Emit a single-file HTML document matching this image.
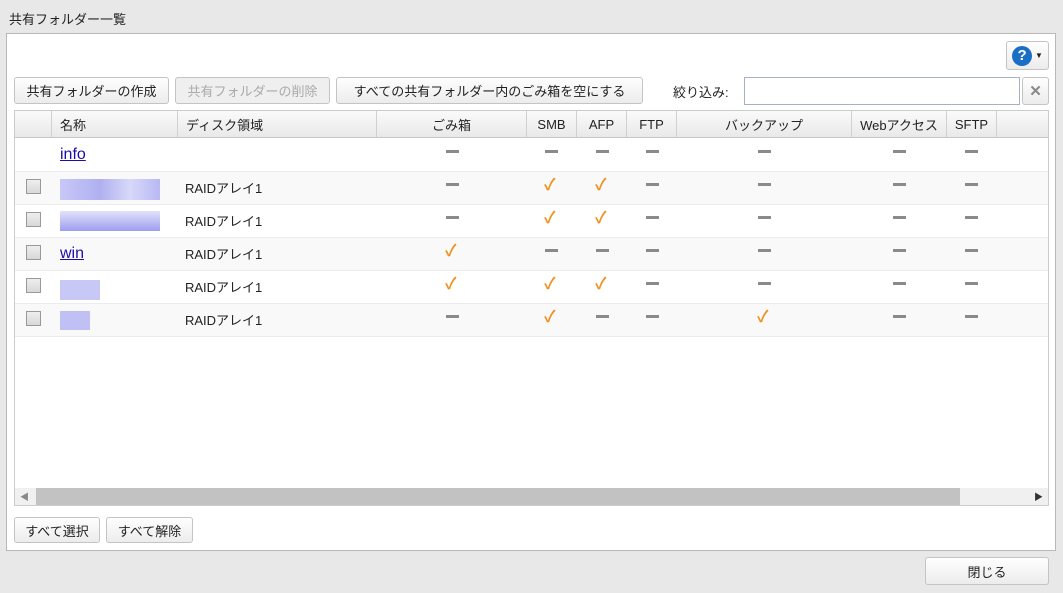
<!DOCTYPE html><html><head><meta charset="utf-8"><style>
*{box-sizing:border-box}body{margin:0;width:1063px;height:593px;background:#e8e8e8;font-family:"Liberation Sans","Noto Sans CJK JP",sans-serif;font-size:13px;color:#222;position:relative;overflow:hidden}
.a{position:absolute}
.btn{position:absolute;border:1px solid #c4c4c4;border-radius:3px;background:linear-gradient(#fefefe,#ececec);font-size:13px;display:flex;align-items:center;justify-content:center;color:#222}
.hd{position:absolute;top:111px;height:27px;border-right:1px solid #d0d0d0;background:linear-gradient(#fafafa,#e9e9e9);border-bottom:1px solid #c8c8c8;display:flex;align-items:center;font-size:13px}
.row{position:absolute;left:15px;width:1033px;height:33px;border-bottom:1px solid #ececec}
.d{position:absolute;width:13px;height:3px;background:#8a8a8a}
.c{position:absolute;color:#f0901e;font-size:16px;font-weight:bold}
.cb{position:absolute;left:26px;width:15px;height:15px;border:1px solid #999;background:linear-gradient(#eee,#d8d8d8)}
.r{position:absolute;left:185px;font-size:13px}
</style></head><body>
<div class="a" style="left:9px;top:9px;font-size:13px">共有フォルダー一覧</div>
<div class="a" style="left:6px;top:33px;width:1050px;height:518px;background:#fff;border:1px solid #b8b8b8"></div>
<div class="btn" style="left:1006px;top:41px;width:43px;height:29px"><span style="display:inline-block;width:20px;height:20px;border-radius:50%;background:#1a6fc4;color:#fff;font-weight:bold;text-align:center;line-height:20px;font-size:15px">?</span><span style="font-size:8px;margin-left:3px">▼</span></div>
<div class="btn" style="left:14px;top:77px;width:155px;height:27px">共有フォルダーの作成</div>
<div class="btn" style="left:175px;top:77px;width:155px;height:27px;color:#aaa;background:#efefef">共有フォルダーの削除</div>
<div class="btn" style="left:336px;top:77px;width:307px;height:27px">すべての共有フォルダー内のごみ箱を空にする</div>
<div class="a" style="left:673px;top:82px">絞り込み:</div>
<div class="a" style="left:744px;top:77px;width:276px;height:28px;border:1px solid #a8b0c8"></div>
<div class="btn" style="left:1022px;top:77px;width:27px;height:28px;color:#888;font-weight:bold;font-size:15px">✕</div>
<div class="a" style="left:14px;top:110px;width:1035px;height:396px;border:1px solid #ccc"></div>
<div class="hd" style="left:15px;width:37px"></div>
<div class="hd" style="left:52px;width:126px;padding-left:8px">名称</div>
<div class="hd" style="left:178px;width:199px;padding-left:8px">ディスク領域</div>
<div class="hd" style="left:377px;width:150px;justify-content:center">ごみ箱</div>
<div class="hd" style="left:527px;width:50px;justify-content:center">SMB</div>
<div class="hd" style="left:577px;width:50px;justify-content:center">AFP</div>
<div class="hd" style="left:627px;width:50px;justify-content:center">FTP</div>
<div class="hd" style="left:677px;width:175px;justify-content:center">バックアップ</div>
<div class="hd" style="left:852px;width:95px;justify-content:center">Webアクセス</div>
<div class="hd" style="left:947px;width:50px;justify-content:center">SFTP</div>
<div class="hd" style="left:997px;width:51px;border-right:0"></div>

<div class="row" style="top:139px;background:#fff"></div>
<div class="row" style="top:172px;background:#f9f9f9"></div>
<div class="row" style="top:205px;background:#fff"></div>
<div class="row" style="top:238px;background:#f9f9f9"></div>
<div class="row" style="top:271px;background:#fff"></div>
<div class="row" style="top:304px;background:#f9f9f9"></div>

<a class="a" style="left:60px;top:146px;font-size:16px;color:#1a0dab;text-decoration:underline">info</a>
<a class="a" style="left:60px;top:245px;font-size:16px;color:#1a0dab;text-decoration:underline">win</a>
<div class="a" style="left:60px;top:179px;width:100px;height:21px;background:linear-gradient(90deg,#c8c8f8,#b0b0f0 40%,#d8d8fa 70%,#b8b8f4)"></div>
<div class="a" style="left:60px;top:211px;width:100px;height:20px;background:linear-gradient(#e2e2fb,#9d9df0)"></div>
<div class="a" style="left:60px;top:280px;width:40px;height:20px;background:#c8c8f6"></div>
<div class="a" style="left:60px;top:311px;width:30px;height:19px;background:#c0c0f4"></div>

<div class="cb" style="top:179px"></div><div class="cb" style="top:212px"></div><div class="cb" style="top:245px"></div><div class="cb" style="top:278px"></div><div class="cb" style="top:311px"></div>
<div class="r" style="top:178px">RAIDアレイ1</div><div class="r" style="top:211px">RAIDアレイ1</div><div class="r" style="top:244px">RAIDアレイ1</div><div class="r" style="top:277px">RAIDアレイ1</div><div class="r" style="top:310px">RAIDアレイ1</div>

<div id="m"></div>
<script>
var xs=[452,551,602,652,764,899,971];
var rows=[[0,0,0,0,0,0,0],[0,1,1,0,0,0,0],[0,1,1,0,0,0,0],[1,0,0,0,0,0,0],[1,1,1,0,0,0,0],[0,1,0,0,1,0,0]];
var h='';rows.forEach(function(r,i){var y=150+33*i;r.forEach(function(v,j){h+=v?'<div class="c" style="left:'+(xs[j]-7)+'px;top:'+(y-12)+'px">✓</div>':'<div class="d" style="left:'+(xs[j]-6)+'px;top:'+y+'px"></div>';});});
document.getElementById('m').innerHTML=h;
</script>
<div class="a" style="left:15px;top:488px;width:1033px;height:17px;background:#f0f0f0"></div>
<div class="a" style="left:36px;top:488px;width:924px;height:17px;background:#c2c2c2"></div>
<div class="a" style="left:20px;top:490px;font-size:9px;color:#888">◀</div>
<div class="a" style="left:1034px;top:490px;font-size:9px;color:#333">▶</div>
<div class="btn" style="left:14px;top:517px;width:86px;height:26px">すべて選択</div>
<div class="btn" style="left:106px;top:517px;width:87px;height:26px">すべて解除</div>
<div class="btn" style="left:925px;top:557px;width:124px;height:28px">閉じる</div>
</body></html>
